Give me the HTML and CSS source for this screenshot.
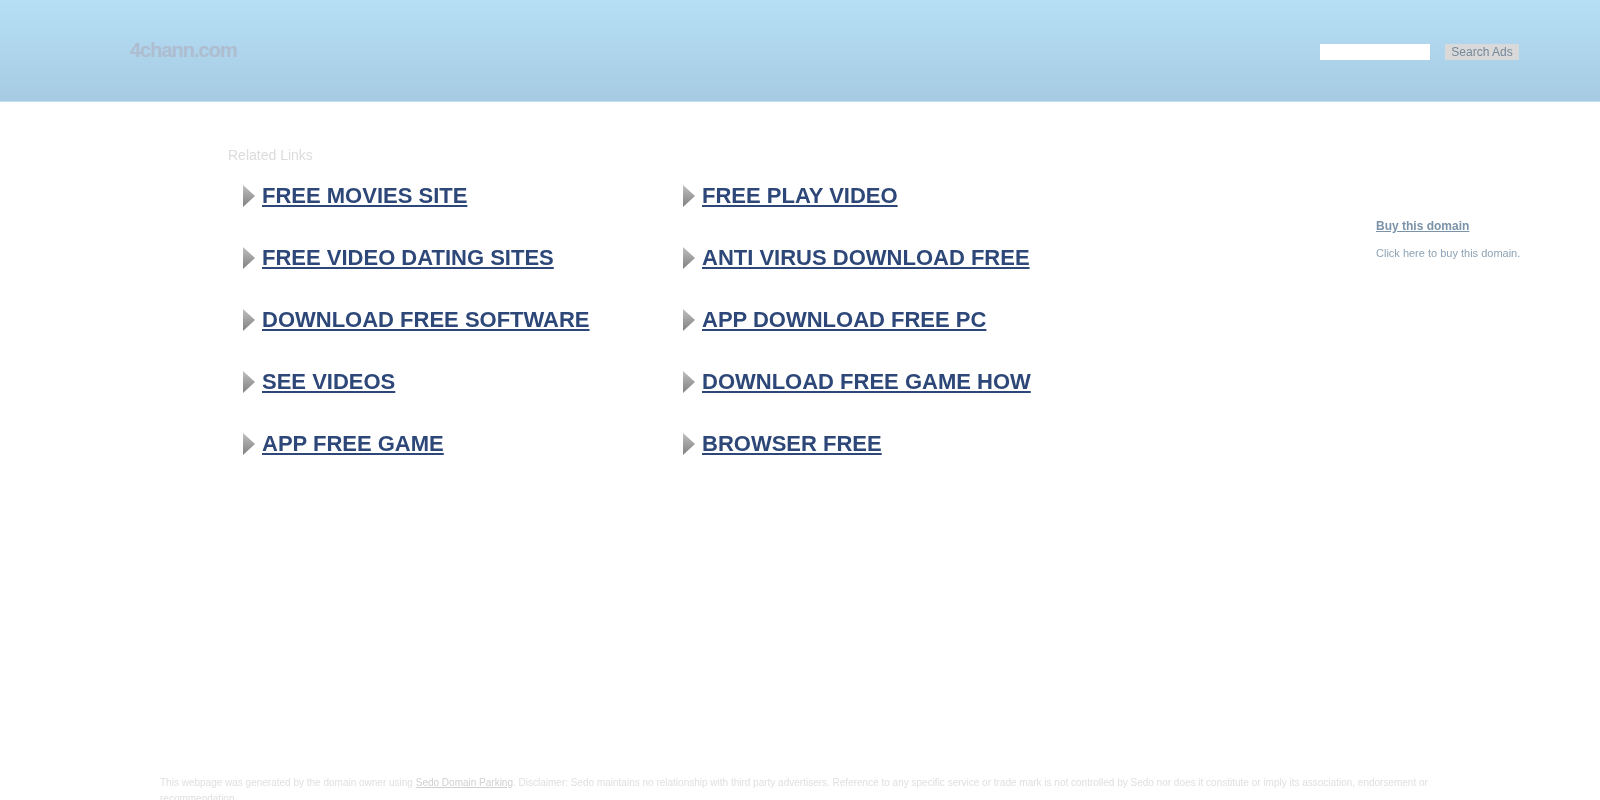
FILE: index.html
```html
<!DOCTYPE html>
<html lang="en">
<head>
  <meta charset="UTF-8" />
  <title>4chann.com</title>
  <link rel="stylesheet" href="styles.css">
</head>
<body>
  <div class="header">
    <div class="logo">4chann.com</div>
    <form class="search">
      <input class="search-input" type="text" />
      <button class="search-btn" type="button">Search Ads</button>
    </form>
  </div>

  <div class="content">
    <div class="links">
      <div class="links-title">Related Links</div>
      <ul class="links-grid">
        <li><a href="#">FREE MOVIES SITE</a></li>
        <li><a href="#">FREE PLAY VIDEO</a></li>
        <li><a href="#">FREE VIDEO DATING SITES</a></li>
        <li><a href="#">ANTI VIRUS DOWNLOAD FREE</a></li>
        <li><a href="#">DOWNLOAD FREE SOFTWARE</a></li>
        <li><a href="#">APP DOWNLOAD FREE PC</a></li>
        <li><a href="#">SEE VIDEOS</a></li>
        <li><a href="#">DOWNLOAD FREE GAME HOW</a></li>
        <li><a href="#">APP FREE GAME</a></li>
        <li><a href="#">BROWSER FREE</a></li>
      </ul>
    </div>
    <div class="side">
      <a class="side-title" href="#">Buy this domain</a>
      <a class="side-text" href="#">Click here to buy this domain.</a>
    </div>
  </div>

  <div class="footer">
    This webpage was generated by the domain owner using <a href="#">Sedo Domain Parking</a>. Disclaimer: Sedo maintains no relationship with third party advertisers. Reference to any specific service or trade mark is not controlled by Sedo nor does it constitute or imply its association, endorsement or recommendation.
  </div>
</body>
</html>
```

FILE: styles.css
```css
html, body {
  height: 800px;
  overflow: hidden;
}
body {
  margin: 0;
  background: #fff;
  font-family: "Liberation Sans", Arial, sans-serif;
  opacity: 0.999;
}
.header {
  height: 101px;
  border-bottom: 1px solid #c4e1f2;
  background: linear-gradient(to bottom, #b6dff6, #a6cbe3);
  display: flex;
  justify-content: space-between;
  padding: 0 81px 0 130px;
}
.logo {
  margin-top: 38px;
  font-size: 20px;
  line-height: 25px;
  font-weight: bold;
  letter-spacing: -1px;
  color: #aebdcf;
}
.search {
  display: flex;
  gap: 15px;
  margin-top: 44px;
  height: 16px;
}
.search-input {
  width: 110px;
  height: 16px;
  box-sizing: border-box;
  border: none;
  border-radius: 0;
  padding: 0;
  background: #fff;
}
.search-btn {
  width: 74px;
  height: 16px;
  padding: 0;
  border: none;
  border-radius: 0;
  background: #d9d9d9;
  color: #75899b;
  font-family: inherit;
  font-size: 12px;
  line-height: 16px;
}
.content {
  display: flex;
  justify-content: space-between;
  padding: 0 80px 0 228px;
}
.links-title {
  margin-top: 45px;
  font-size: 14px;
  line-height: 16px;
  color: #dcdcdc;
}
.links-grid {
  list-style: none;
  margin: 0;
  padding: 0 0 0 15px;
  display: grid;
  grid-template-columns: 440px 440px;
  grid-auto-rows: 62px;
  margin-top: 11px;
}
.links-grid li {
  display: flex;
  align-items: center;
  gap: 7px;
  height: 44px;
}
.links-grid li::before {
  content: "";
  width: 12px;
  height: 22px;
  background: linear-gradient(to bottom, #c0c0c0, #808080);
  clip-path: polygon(0 0, 100% 50%, 0 100%);
}
.links-grid a {
  font-size: 22px;
  font-weight: bold;
  color: #2d4778;
}
.side {
  width: 144px;
  padding-top: 117px;
  display: flex;
  flex-direction: column;
  gap: 13px;
}
.side-title {
  font-size: 12px;
  line-height: 14px;
  font-weight: bold;
  color: #7b93a8;
}
.side-text {
  font-size: 11px;
  line-height: 14px;
  color: #8ea3b4;
  text-decoration: none;
  white-space: nowrap;
}
.footer {
  margin-top: 291px;
  padding: 0 160px;
  font-size: 10px;
  line-height: 16px;
  color: #e0e0e0;
}
.footer a {
  color: #d0d0d0;
}
```
